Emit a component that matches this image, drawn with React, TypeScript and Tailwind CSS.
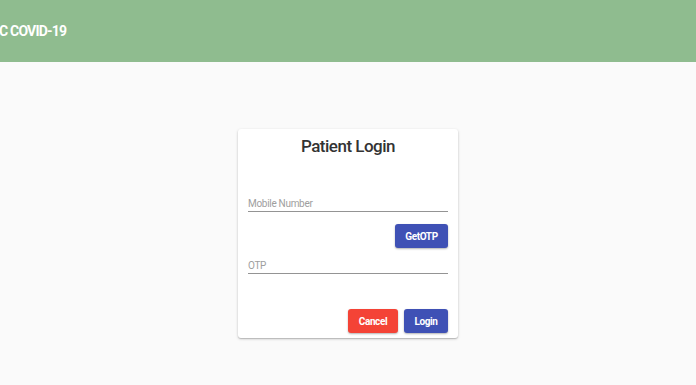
import React from "react";

export default function App() {
  return (
    <div className="w-[696px] h-[385px] bg-[#fafafa] overflow-hidden" style={{ fontFamily: "Roboto, 'Noto Sans', sans-serif" }}>
      <header className="h-[62px] bg-[#8fbc8f] flex items-center">
        <span className="text-white text-[14px] font-bold leading-none tracking-[-0.8px] -ml-[1px]">C COVID-19</span>
      </header>
      <div className="flex justify-center pt-[67px]">
        <div className="w-[220px] bg-white rounded-[3px] shadow-[0_1px_3px_rgba(0,0,0,0.2),0_1px_1px_rgba(0,0,0,0.14)] px-[10px] pt-[5px] pb-[5px] flex flex-col">
          <h1 className="text-center text-[17px] leading-[24px] font-medium text-[#333] tracking-[-0.5px]">Patient Login</h1>
          <div className="mt-[34px] h-[20px] border-b border-[#949494] flex items-center">
            <span className="text-[10px] text-[#9e9e9e] leading-none pt-[4px] tracking-[-0.3px]">Mobile Number</span>
          </div>
          <div className="flex justify-end mt-[12px]">
            <button className="w-[53px] h-[24px] bg-[#3f51b5] text-white text-[10px] font-bold rounded-[3px] tracking-[-0.4px] shadow-[0_1px_2px_rgba(0,0,0,0.3)]">GetOTP</button>
          </div>
          <div className="mt-[6px] h-[20px] border-b border-[#949494] flex items-center">
            <span className="text-[10px] text-[#9e9e9e] leading-none pt-[4px] tracking-[-0.3px]">OTP</span>
          </div>
          <div className="flex justify-end gap-[6px] mt-[35px]">
            <button className="w-[50px] h-[24px] bg-[#f44336] text-white text-[10px] font-bold rounded-[3px] tracking-[-0.4px] shadow-[0_1px_2px_rgba(0,0,0,0.3)]">Cancel</button>
            <button className="w-[44px] h-[24px] bg-[#3f51b5] text-white text-[10px] font-bold rounded-[3px] tracking-[-0.4px] shadow-[0_1px_2px_rgba(0,0,0,0.3)]">Login</button>
          </div>
        </div>
      </div>
    </div>
  );
}
